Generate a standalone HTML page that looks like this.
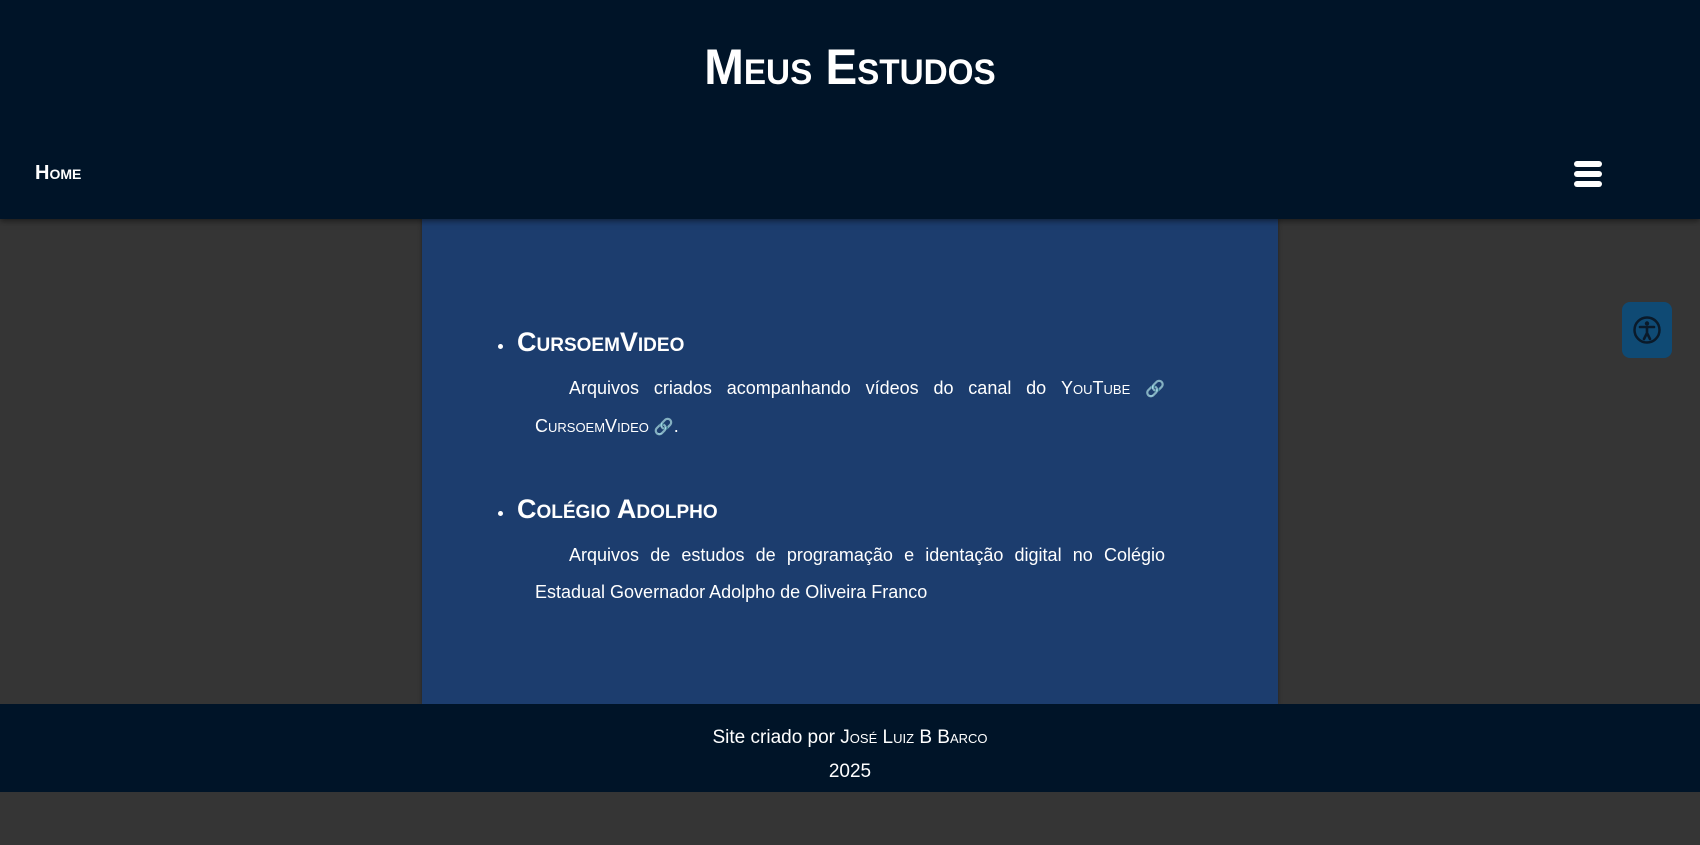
<!DOCTYPE html>
<html><head><meta charset="utf-8"><style>
*{margin:0;padding:0;box-sizing:border-box}
body{width:1700px;height:845px;background:#353535;font-family:"Liberation Sans",sans-serif;color:#fff;position:relative;overflow:hidden}
header{position:absolute;left:0;top:0;width:1700px;height:219px;background:#001428;box-shadow:0 2px 6px rgba(0,0,0,.5);z-index:2}
h1{position:absolute;top:38px;width:100%;text-align:center;font-size:50px;font-variant:small-caps;font-weight:bold;transform:scaleX(.95)}
.home{position:absolute;left:35px;top:162px;font-size:20px;font-weight:bold;font-variant:small-caps}
.ham{position:absolute;left:1574px;top:161px;width:28px}
.ham div{height:6px;background:#fff;border-radius:3px;margin-bottom:4px}
main{position:absolute;left:422px;top:219px;width:856px;height:485px;background:#1c3d6e;box-shadow:0 0 4px rgba(0,0,0,.4)}
.bul{position:absolute;left:76px;width:5px;height:5px;border-radius:3px;background:#fff}
h2{position:absolute;left:95px;font-size:27px;font-weight:bold;font-variant:small-caps}
p{position:absolute;left:113px;width:630px;font-size:18px;line-height:37px;text-align:justify;text-indent:34px}
.sc{font-variant:small-caps}
.lk{color:#999;font-size:16px}
footer{position:absolute;left:0;top:704px;width:1700px;height:88px;background:#001428;text-align:center;font-size:19px;line-height:34px;padding-top:17px}
.acc{position:absolute;left:1622px;top:302px;width:50px;height:56px;border-radius:8px;background:#0f4a74;display:flex;align-items:center;justify-content:center}
</style></head><body>
<header><h1>Meus Estudos</h1><div class="home">Home</div><div class="ham"><div></div><div></div><div></div></div></header>
<main>
<div class="bul" style="top:125px"></div><h2 style="top:108px">CursoemVideo</h2>
<p style="top:151px">Arquivos criados acompanhando vídeos do canal do <span class="sc">YouTube</span> <span class="lk">🔗</span> <span class="sc">CursoemVideo</span> <span class="lk">🔗</span>.</p>
<div class="bul" style="top:292px"></div><h2 style="top:275px">Colégio Adolpho</h2>
<p style="top:318px">Arquivos de estudos de programação e identação digital no Colégio Estadual Governador Adolpho de Oliveira Franco</p>
</main>
<footer>Site criado por <span class="sc">José Luiz B Barco</span><br>2025</footer>
<div class="acc"><svg width="30" height="30" viewBox="0 0 30 30"><circle cx="15" cy="15" r="12.5" fill="none" stroke="#0a1a2a" stroke-width="2.5"/><circle cx="15" cy="8.5" r="2.2" fill="#0a1a2a"/><path d="M8 12h14M15 12v6M15 18l-3 6M15 18l3 6" stroke="#0a1a2a" stroke-width="2.6" fill="none" stroke-linecap="round"/></svg></div>
</body></html>
